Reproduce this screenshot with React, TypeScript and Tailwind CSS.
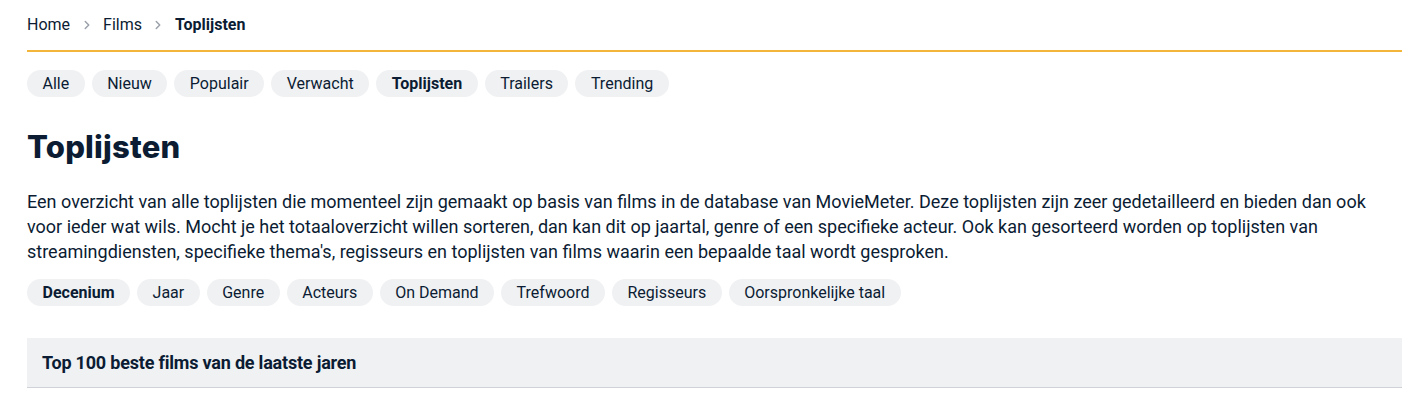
import { ChevronRight } from 'lucide-react'

const tabs = ['Alle', 'Nieuw', 'Populair', 'Verwacht', 'Toplijsten', 'Trailers', 'Trending']
const filters = ['Decenium', 'Jaar', 'Genre', 'Acteurs', 'On Demand', 'Trefwoord', 'Regisseurs', 'Oorspronkelijke taal']

function Pill({ label, active }: { label: string; active?: boolean }) {
  return (
    <span
      className={`h-[27px] px-[15.5px] flex items-center rounded-full bg-[#f0f1f3] text-[16px] text-[#0b1c33] ${
        active ? 'font-bold' : ''
      }`}
    >
      {label}
    </span>
  )
}

export default function App() {
  return (
    <div className="bg-white min-h-screen font-['Roboto',sans-serif] text-[#0b1c33]">
      <div className="w-[1375px] ml-[27px]">
        <nav className="h-[50px] flex items-center gap-[9.5px] text-[16px]">
          <span>Home</span>
          <ChevronRight className="w-[14px] h-[14px] text-[#9aa1ab]" strokeWidth={2.5} />
          <span>Films</span>
          <ChevronRight className="w-[14px] h-[14px] text-[#9aa1ab]" strokeWidth={2.5} />
          <span className="font-bold">Toplijsten</span>
        </nav>
        <div className="h-[2px] bg-[#f4b63a]" />

        <div className="flex gap-[7px] mt-[18px]">
          {tabs.map((t) => (
            <Pill key={t} label={t} active={t === 'Toplijsten'} />
          ))}
        </div>

        <h1 className="mt-[30px] text-[31px] leading-[40px] font-extrabold font-['Inter',sans-serif] tracking-[0.2px] text-[#0b1c33]">
          Toplijsten
        </h1>

        <p className="mt-[22px] text-[18px] leading-[25px]">
          Een overzicht van alle toplijsten die momenteel zijn gemaakt op basis van films in de database van MovieMeter. Deze
          toplijsten zijn zeer gedetailleerd en bieden dan ook voor ieder wat wils. Mocht je het totaaloverzicht willen sorteren, dan
          kan dit op jaartal, genre of een specifieke acteur. Ook kan gesorteerd worden op toplijsten van streamingdiensten,
          specifieke thema's, regisseurs en toplijsten van films waarin een bepaalde taal wordt gesproken.
        </p>

        <div className="flex gap-[7px] mt-[15px]">
          {filters.map((f) => (
            <Pill key={f} label={f} active={f === 'Decenium'} />
          ))}
        </div>

        <div className="mt-[32px] h-[50px] bg-[#f0f1f3] border-b border-[#cfd3d8] flex items-center px-[15px]">
          <h2 className="text-[18px] font-bold tracking-[-0.2px]">Top 100 beste films van de laatste jaren</h2>
        </div>
      </div>
    </div>
  )
}
